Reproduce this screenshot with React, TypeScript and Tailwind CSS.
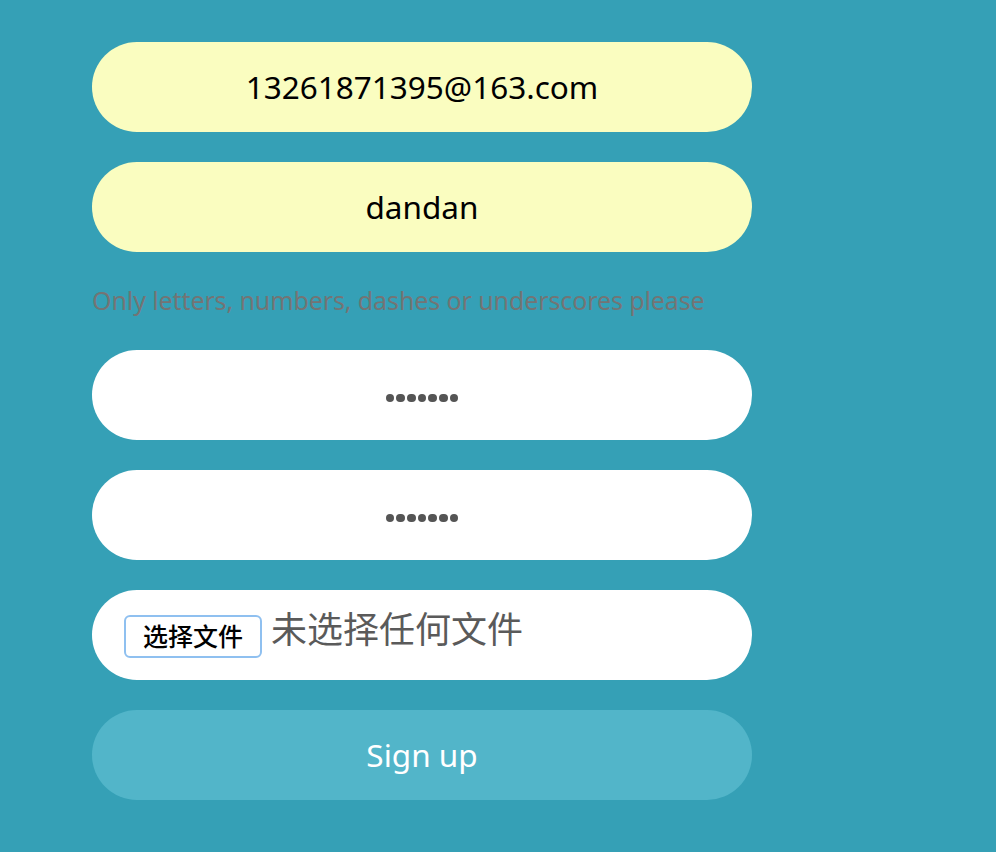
export default function App() {
  const pill =
    "flex h-[90px] w-[660px] items-center justify-center rounded-[45px] text-[31.5px]";

  // password mask, drawn as dots so the size matches
  const Dots = () => (
    <div className="mt-[6px] flex gap-[2.2px]">
      {Array.from({ length: 7 }).map((_, i) => (
        <span key={i} className="h-[8.5px] w-[8.5px] rounded-full bg-[#555]" />
      ))}
    </div>
  );

  return (
    <div
      className="min-h-[852px] w-full bg-[#35a0b6] pl-[92px] pt-[42px]"
      style={{ fontFamily: '"Noto Sans", "Noto Sans CJK SC", sans-serif' }}
    >
      <div className="flex w-[660px] flex-col">
        <div className={`${pill} bg-[#fafdc0] text-black`}>13261871395@163.com</div>
        <div className={`${pill} mt-[30px] bg-[#fafdc0] text-black`}>dandan</div>

        <p className="mt-[30px] h-[38px] text-[25px] leading-[36px] tracking-[-0.1px] text-[#747474]">
          Only letters, numbers, dashes or underscores please
        </p>

        <div className={`${pill} mt-[30px] bg-white`}>
          <Dots />
        </div>
        <div className={`${pill} mt-[30px] bg-white`}>
          <Dots />
        </div>

        {/* file picker */}
        <div className="mt-[30px] flex h-[90px] w-[660px] items-start rounded-[45px] bg-white pl-[32px] pt-[25px]">
          <span className="flex h-[43px] w-[138px] items-center justify-center rounded-[6px] border-[2px] border-[#8fc0f0] bg-white text-[25px] font-medium text-black">
            选择文件
          </span>
          <span className="ml-[9px] -mt-[12px] text-[36px] text-[#5a5a5a]">未选择任何文件</span>
        </div>

        <button className={`${pill} mt-[30px] bg-[#52b5c9] text-white`}>Sign up</button>
      </div>
    </div>
  );
}
